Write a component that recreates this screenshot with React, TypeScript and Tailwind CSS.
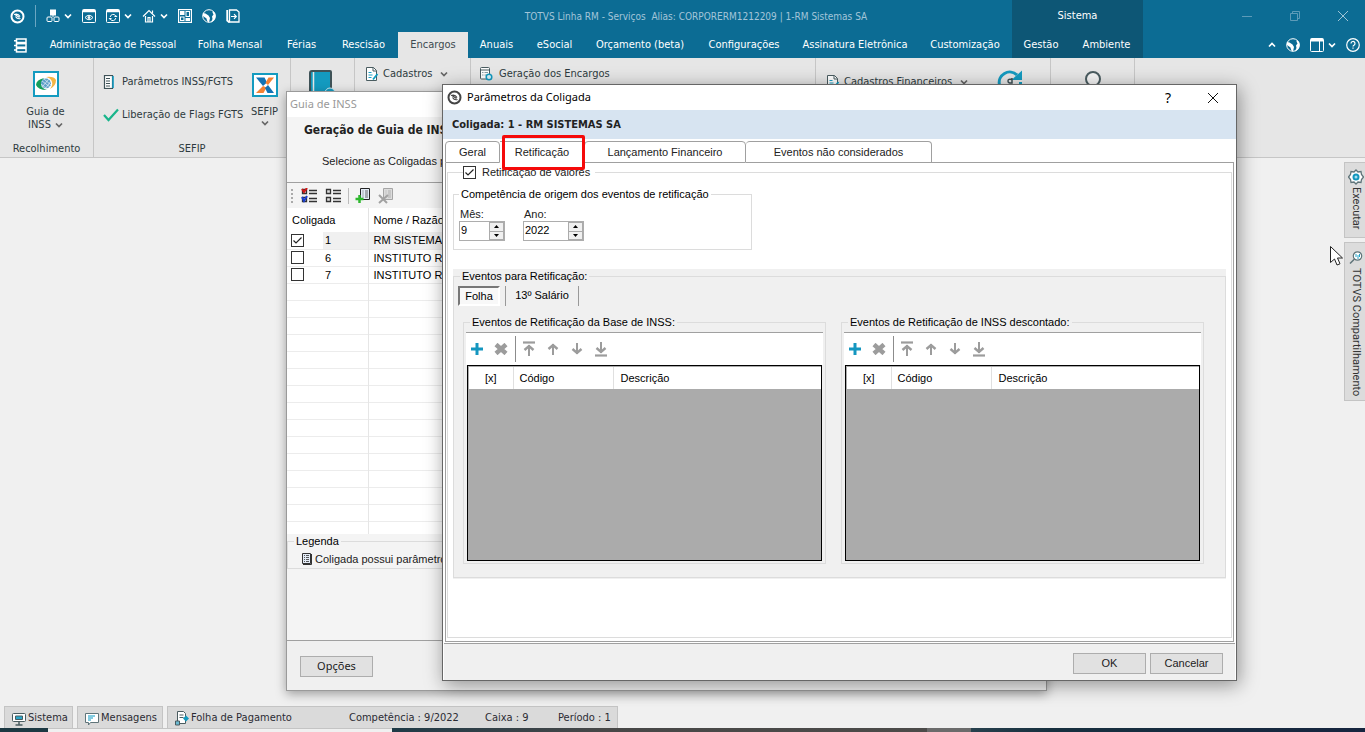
import type { ReactNode } from "react";

const TABS = [
  { label: "Administração de Pessoal", width: "w-[146px]" },
  { label: "Folha Mensal", width: "w-[88px]" },
  { label: "Férias", width: "w-[55px]" },
  { label: "Rescisão", width: "w-[69px]" },
  { label: "Encargos", width: "w-[70px]", active: true },
  { label: "Anuais", width: "w-[57px]" },
  { label: "eSocial", width: "w-[59px]" },
  { label: "Orçamento (beta)", width: "w-[112px]" },
  { label: "Configurações", width: "w-[96px]" },
  { label: "Assinatura Eletrônica", width: "w-[126px]" },
  { label: "Customização", width: "w-[94px]" },
];

const COMPANIES = [
  { id: "1", name: "RM SISTEMAS", checked: true },
  { id: "6", name: "INSTITUTO R", checked: false },
  { id: "7", name: "INSTITUTO R", checked: false },
];

type IconProps = { className?: string };

const Chevron = ({ className = "" }: IconProps) => (
  <svg viewBox="0 0 8 8" className={`h-2 w-2 shrink-0 ${className}`} fill="none" stroke="currentColor" strokeWidth="1.700">
    <path d="M1 2.500 4 5.500 7 2.500" />
  </svg>
);

const TotvsLogo = ({ className = "" }: IconProps) => (
  <svg viewBox="0 0 15 15" className={`h-[15px] w-[15px] shrink-0 ${className}`} fill="none" stroke="currentColor">
    <circle cx="7.500" cy="7.500" r="6" strokeWidth="2" />
    <path d="M4 5.500Q8 4 10 7.500M5 5.500 9.500 8.500M5.500 7.500Q7.500 10.500 10.500 9.500" strokeWidth="1.200" />
  </svg>
);

const Cubes = () => (
  <svg viewBox="0 0 14 14" className="h-3.5 w-3.5" fill="none" stroke="currentColor">
    <rect x="4.500" y="1" width="5" height="5" fill="currentColor" />
    <path d="M7 6v2" />
    <rect x="1" y="8" width="5" height="4.500" rx="1" />
    <rect x="8" y="8" width="5" height="4.500" rx="1" />
  </svg>
);

const WindowEye = () => (
  <svg viewBox="0 0 14 14" className="h-3.5 w-3.5" fill="none" stroke="currentColor">
    <rect x="0.500" y="0.500" width="13" height="13" rx="1" />
    <path d="M1 2h12" strokeWidth="2.500" />
    <path d="M3 8.500q4-4.500 8 0-4 4.500-8 0z" />
    <circle cx="7" cy="8.500" r="1" fill="currentColor" />
  </svg>
);

const WindowRefresh = () => (
  <svg viewBox="0 0 14 14" className="h-3.5 w-3.5" fill="none" stroke="currentColor">
    <rect x="0.500" y="0.500" width="13" height="13" rx="1" />
    <path d="M1 2h12" strokeWidth="2.500" />
    <path d="M4.200 8a3 3 0 0 1 5.300-1.500M9.800 9a3 3 0 0 1-5.300 1.500" />
    <path d="M8 8h3.500L9.800 6zM2.500 9H6L4.200 11z" fill="currentColor" stroke="none" />
  </svg>
);

const HomeIcon = () => (
  <svg viewBox="0 0 14 14" className="h-3.5 w-3.5" fill="none" stroke="currentColor" strokeWidth="1.200">
    <path d="M1 7.500 7 1.500l6 6M3.500 7v6h7V7M6 13V8.500h2V13" />
    <path d="M10.500 1.500v3" />
  </svg>
);

const GridIcon = () => (
  <svg viewBox="0 0 14 14" className="h-3.5 w-3.5" fill="none" stroke="currentColor">
    <rect x="0.500" y="0.500" width="13" height="13" strokeWidth="1.300" />
    <rect x="2.500" y="2.500" width="3.500" height="3" fill="currentColor" />
    <rect x="8" y="2.500" width="3.500" height="5" />
    <rect x="2.500" y="8" width="3.500" height="3.500" />
    <rect x="8" y="9.500" width="3.500" height="2" fill="currentColor" />
  </svg>
);

const Globe = () => (
  <svg viewBox="0 0 14 14" className="h-3.5 w-3.5" fill="none" stroke="currentColor">
    <circle cx="7" cy="7" r="6.300" />
    <path d="M1 4 3.500 4.500 6.500 6.500 8 9 7 13.500Q5 13 4.500 9.500L1 7zM11 2q3 2 2.500 6T8.800 13.500L10.500 10 10 7.500 11.500 5.500l-1-2z" fill="currentColor" stroke="none" />
  </svg>
);

const ExitIcon = () => (
  <svg viewBox="0 0 14 14" className="h-3.5 w-3.5" fill="none" stroke="currentColor">
    <path d="M3.500 1h7l2.500 2v10H3.500z" strokeWidth="1.300" />
    <path d="M1.200 1v10.500l2.300 2" strokeWidth="1.800" />
    <path d="M5 7.500h5M8 5.200l2.300 2.300L8 9.800" strokeWidth="1.200" />
  </svg>
);

const MenuStack = () => (
  <svg viewBox="0 0 13 15" className="h-[15px] w-[13px]" fill="none" stroke="currentColor" strokeWidth="1.500">
    <rect x="2.500" y="1" width="9.500" height="3.500" />
    <rect x="2.500" y="5.700" width="9.500" height="3.500" />
    <rect x="2.500" y="10.400" width="9.500" height="3.500" />
    <path d="M0 2.700h3M0 7.400h3M0 12.100h3" />
  </svg>
);

const SheetIcon = ({ className = "" }: IconProps) => (
  <svg viewBox="0 0 14 14" className={`h-3.5 w-3.5 shrink-0 ${className}`} fill="none" stroke="#4a5c60">
    <path d="M1.500.5h7l3 3v10h-10z" fill="#fff" />
    <path d="M8 .5v3.500h3.500" />
    <path d="M3.500 5.500h3M3.500 8h4M3.500 10.500h3" stroke="#1a9fc4" />
    <path d="M8 12.500 12.500 7" stroke="#0c9abe" strokeWidth="1.800" />
  </svg>
);

const NotebookIcon = () => (
  <svg viewBox="0 0 12 14" className="h-3.5 w-3 shrink-0" fill="none" stroke="#3f5257">
    <rect x="1.500" y=".5" width="8" height="13" fill="#fff" strokeWidth="1.200" />
    <path d="M10 1v12" stroke="#159ac0" strokeWidth="1.600" />
    <path d="M3 3.500h4M3 6h4M3 8.500h4M3 11h4" />
  </svg>
);

const GearWindowIcon = () => (
  <svg viewBox="0 0 14 14" className="h-3.5 w-3.5 shrink-0" fill="none" stroke="#4a5c60">
    <rect x="1.500" y=".5" width="9" height="11.500" rx="1" fill="#fff" />
    <path d="M1.500 3h9" />
    <path d="M3 5.500h1.500M5.500 5.500H9M3 8h1.500M5.500 8H8" stroke="#8ba0a5" />
    <circle cx="10" cy="10" r="2.800" fill="#d8f1f8" stroke="#139ac0" strokeWidth="1.500" />
  </svg>
);

const CaixaIcon = () => (
  <svg viewBox="0 0 26 26" className="h-[26px] w-[26px]">
    <rect x="1" y="1" width="24" height="24" fill="#fff" stroke="#149bc0" strokeWidth="2" />
    <path d="M11 7Q3 9 3 14q2 5 11 5-6-2-6-6 0-3 3-6z" fill="#159e5b" />
    <path d="M13 6q8-1 10 3 0 6-6 9 3-4 2-7-1-4-6-5z" fill="#f4b545" />
    <ellipse cx="13" cy="12.500" rx="5" ry="5" fill="#5d9fc9" />
    <path d="m9 10 8 6M8 13l6 5M11 8l7 6M9 16l7-8M12 18l6-8" stroke="#fff" strokeWidth=".6" />
  </svg>
);

const SefipIcon = () => (
  <svg viewBox="0 0 26 24" className="h-6 w-[26px]">
    <rect x="1" y="1" width="24" height="22" fill="#fff" stroke="#149bc0" strokeWidth="2" />
    <path d="M4 4.500h8.500l2.500 5-4 3.500z" fill="#1173b5" />
    <path d="M22 4.500h-5.500l-3 5.500 2.500 2z" fill="#f48232" />
    <path d="M11 13 4 20h7.500l3-5.500z" fill="#f48232" />
    <path d="m16 12 6 8h-6.500L13 15z" fill="#1173b5" />
  </svg>
);

const LegendList = () => (
  <svg viewBox="0 0 10 12" className="h-3 w-2.5 shrink-0" fill="none" stroke="#333">
    <path d="M.5.5h8v10h-8z" fill="#e3ebf6" />
    <path d="M9.500 1v10.500H1" />
    <path d="M2 2.500h1M4 2.500h3M2 4.500h1M4 4.500h3M2 6.500h1M4 6.500h3M2 8.500h1M4 8.500h3" strokeWidth=".8" />
  </svg>
);

const CheckBox = ({ label, checked }: { label: string; checked: boolean }) => (
  <span className="grid h-[13px] w-[13px] shrink-0">
    <input
      type="checkbox"
      aria-label={label}
      defaultChecked={checked}
      className="peer col-start-1 row-start-1 h-[13px] w-[13px] appearance-none border border-[#333] bg-white"
    />
    <svg viewBox="0 0 13 13" className="pointer-events-none col-start-1 row-start-1 hidden h-[13px] w-[13px] peer-checked:block" fill="none" stroke="#222" strokeWidth="1.200">
      <path d="M2.500 6.500 5 9l5.500-5.500" />
    </svg>
  </span>
);

const QuickAccess = () => (
  <div className="flex h-8 w-[380px] shrink-0 items-center pl-[10px]">
    <TotvsLogo />
    <span className="mx-[10px] h-[22px] w-px bg-[#6ba6c2]" />
    <div className="flex items-center gap-[10px]">
      <button className="flex items-center gap-1" aria-label="Módulos"><Cubes /><Chevron /></button>
      <button aria-label="Visualizar"><WindowEye /></button>
      <button className="flex items-center gap-1" aria-label="Atualizar"><WindowRefresh /><Chevron /></button>
      <button className="flex items-center gap-1" aria-label="Início"><HomeIcon /><Chevron /></button>
      <button aria-label="Painéis"><GridIcon /></button>
      <button aria-label="Idioma"><Globe /></button>
      <button aria-label="Sair"><ExitIcon /></button>
    </div>
  </div>
);

const AppHeader = () => (
  <header className="flex h-[58px] bg-[#0c6c94] text-white">
    <div className="min-w-0 flex-1">
      <div className="flex">
        <QuickAccess />
        <h1 className="flex h-8 flex-1 items-center justify-center text-[10px] whitespace-pre text-[#a3c5d9]">
          TOTVS Linha RM - Serviços  Alias: CORPORERM1212209 | 1-RM Sistemas SA
        </h1>
      </div>
      <nav className="flex h-[26px]">
        <button className="flex w-10 items-center justify-center" aria-label="Menu"><MenuStack /></button>
        {TABS.map((tab) => (
          <button
            key={tab.label}
            className={`${tab.width} whitespace-nowrap ${tab.active ? "bg-[#e6e6e6] text-[#3d4a50]" : ""}`}
          >
            {tab.label}
          </button>
        ))}
      </nav>
    </div>
    <div className="w-[131px] bg-[#0d5675]">
      <div className="flex h-8 items-center justify-center">Sistema</div>
      <div className="flex h-[26px]">
        <button className="w-[58px]">Gestão</button>
        <button className="flex-1">Ambiente</button>
      </div>
    </div>
    <div className="w-[222px]">
      <div className="flex h-8 items-center justify-end gap-[38px] pr-[17px] text-[#5d9bb8]">
        <button aria-label="Minimizar">
          <svg viewBox="0 0 10 10" className="h-2.5 w-2.5" stroke="currentColor"><path d="M0 5.500h10" /></svg>
        </button>
        <button aria-label="Restaurar">
          <svg viewBox="0 0 10 10" className="h-2.5 w-2.5" fill="none" stroke="currentColor">
            <path d="M.5 2.500h7v7h-7zM2.500 2.500v-2h7v7h-2" />
          </svg>
        </button>
        <button aria-label="Fechar" className="text-[#9fc4d6]">
          <svg viewBox="0 0 10 10" className="h-2.5 w-2.5" stroke="currentColor"><path d="m0 0 10 10M10 0 0 10" /></svg>
        </button>
      </div>
      <div className="flex h-[26px] items-center justify-end gap-[10px] pr-[5px]">
        <button aria-label="Recolher"><Chevron className="rotate-180" /></button>
        <button aria-label="Idioma"><Globe /></button>
        <button className="flex items-center gap-1" aria-label="Layout">
          <svg viewBox="0 0 14 14" className="h-3.5 w-3.5" fill="none" stroke="currentColor">
            <rect x=".5" y=".5" width="13" height="13" rx="1" />
            <path d="M1 2h12" strokeWidth="3" />
            <path d="M9.500 3v10" />
          </svg>
          <Chevron />
        </button>
        <button aria-label="Ajuda">
          <svg viewBox="0 0 14 14" className="h-3.5 w-3.5" fill="none" stroke="currentColor" strokeWidth="1.200">
            <circle cx="7" cy="7" r="6.300" />
            <path d="M5 5.500a2 2 0 1 1 3 1.700q-1 .6-1 1.300M7 9.500v1.200" />
          </svg>
        </button>
      </div>
    </div>
  </header>
);

const RibbonGroup = ({ className = "", title, children }: { className?: string; title?: string; children?: ReactNode }) => (
  <div className={`flex shrink-0 flex-col border-r border-[#c6c6c6] ${className}`}>
    <div className="flex flex-1">{children}</div>
    {title && <div className="h-4 text-center leading-4">{title}</div>}
  </div>
);

const Ribbon = () => (
  <div className="flex h-[100px] overflow-hidden border-b border-[#c6c6c6] bg-[#e6e6e6] text-[#2e3b40]">
    <RibbonGroup className="w-[94px]" title="Recolhimento">
      <button className="flex w-full flex-col items-center pt-[13px] pr-[2px] leading-[13px]">
        <CaixaIcon />
        <span className="pt-2">Guia de</span>
        <span className="flex items-center gap-1">INSS <Chevron className="text-[#666]" /></span>
      </button>
    </RibbonGroup>
    <RibbonGroup className="w-[197px]" title="SEFIP">
      <div className="flex w-[149px] flex-col gap-[17px] pt-4 pl-[9px] leading-4">
        <button className="flex items-center gap-[7px] whitespace-nowrap"><NotebookIcon />Parâmetros INSS/FGTS</button>
        <button className="flex items-center gap-[3px] whitespace-nowrap">
          <svg viewBox="0 0 16 14" className="h-3.5 w-4 shrink-0" fill="none" stroke="#19b58b" strokeWidth="2.200">
            <path d="m1 7 4.500 5L15 1.500" />
          </svg>
          Liberação de Flags FGTS
        </button>
      </div>
      <button className="flex flex-1 flex-col items-center pt-[15px] pr-1 leading-[13px]">
        <SefipIcon />
        <span className="pt-2 pb-px">SEFIP</span>
        <Chevron className="text-[#666]" />
      </button>
    </RibbonGroup>
    <RibbonGroup className="w-16">
      <button className="flex items-start pt-3 pl-[18px]" aria-label="Relatórios">
        <svg viewBox="0 0 26 32" className="h-8 w-[26px]" fill="none">
          <path d="M3 1h18q1 0 1 1v28H3q-2 0-2-2V3q0-2 2-2z" fill="#149abf" stroke="#3f5257" strokeWidth="2" />
          <path d="M4.500 2v27" stroke="#e6e6e6" strokeWidth="1.500" />
          <circle cx="21" cy="23" r="5" fill="#149abf" stroke="#cfeaf2" />
        </svg>
      </button>
    </RibbonGroup>
    <RibbonGroup className="w-[116px]">
      <button className="mt-2 flex h-4 items-center gap-1 pl-[10px]"><SheetIcon />Cadastros<Chevron className="ml-1 text-[#666]" /></button>
    </RibbonGroup>
    <RibbonGroup className="w-[345px]">
      <button className="mt-2 flex h-4 items-center gap-[6px] pl-2"><GearWindowIcon />Geração dos Encargos</button>
    </RibbonGroup>
    <RibbonGroup className="w-[235px]">
      <button className="mt-4 flex h-4 w-[152px] items-center gap-1 pl-[10px] whitespace-nowrap"><SheetIcon />Cadastros Financeiros<Chevron className="ml-1 text-[#666]" /></button>
      <button className="flex items-start pt-[11px] pl-7" aria-label="Contabilização">
        <svg viewBox="0 0 28 28" className="h-7 w-7" fill="none">
          <path d="M3.500 16A10.500 10.500 0 0 1 21 6M24.500 13a10.500 10.500 0 0 1-18 8" stroke="#149abf" strokeWidth="3" />
          <path d="M26 1.500V11H15.500z" fill="#149abf" />
          <path d="M16 10.500q-4-1-4 1.500t4 2v-5" stroke="#3f5257" strokeWidth="1.500" />
        </svg>
      </button>
    </RibbonGroup>
    <RibbonGroup className="w-[84px]">
      <button className="flex w-full items-start justify-center pt-[13px]" aria-label="Pesquisar">
        <svg viewBox="0 0 18 24" className="h-6 w-[18px]" fill="none" stroke="#4a5c60" strokeWidth="2">
          <circle cx="9" cy="8" r="7" fill="#f4f4f4" />
          <path d="M9 15v8" />
        </svg>
      </button>
    </RibbonGroup>
  </div>
);

const SideTabs = () => (
  <aside className="flex w-[21px] flex-col gap-1 pt-1 font-['Roboto',sans-serif] text-[#333]">
    <button className="flex h-[76px] flex-col items-center gap-[2px] border border-r-0 border-[#c4c4c4] bg-[#dcdcdc] pt-[6px] pl-px">
      <svg viewBox="0 0 16 16" className="h-4 w-4 shrink-0" fill="none">
        <path d="m8 1 2 2 3-.5.5 3L15.500 8l-2 2.500-.5 3-3-.5-2 2-2-2-3 .5-.5-3L.5 8l2-2.500.5-3 3 .5z" fill="#fff" stroke="#5f7479" strokeWidth="1.300" />
        <circle cx="8" cy="8" r="2.500" fill="#a4dff0" stroke="#1297bd" strokeWidth="2" />
      </svg>
      <span className="[writing-mode:vertical-rl]">Executar</span>
    </button>
    <button className="flex h-[159px] flex-col items-center gap-1 border border-r-0 border-[#c4c4c4] bg-[#dcdcdc] pt-2 pl-px">
      <svg viewBox="0 0 14 13" className="h-[13px] w-3.5 shrink-0" fill="none" stroke="#5f7479">
        <circle cx="8.500" cy="5" r="4.200" fill="#fff" strokeWidth="1.200" />
        <path d="M5.500 8 1 12.500" strokeWidth="1.500" />
        <path d="M7 3v3M9 4v4M10.500 3v3" stroke="#27a4c8" />
      </svg>
      <span className="whitespace-nowrap [writing-mode:vertical-rl]">TOTVS Compartilhamento</span>
    </button>
  </aside>
);

const StatusBar = () => (
  <footer>
    <div className="flex h-[22px] gap-1 pl-1 text-[#2b2b33]">
      <div className="flex w-[69px] items-center gap-[2px] whitespace-nowrap border border-b-0 border-[#c4c4c4] bg-[#dadada] pt-[2px] pl-[7px]">
        <svg viewBox="0 0 14 14" className="h-3.5 w-3.5 shrink-0" fill="none" stroke="#4a5c60">
          <rect x=".5" y="1.500" width="13" height="8" rx="1" fill="#fff" />
          <path d="M3.500 4h7v3.500h-7z" fill="#2ba6c9" />
          <path d="M7 10v3M3.500 13h7" strokeWidth="1.500" />
        </svg>
        Sistema
      </div>
      <div className="flex w-[86px] items-center gap-[2px] whitespace-nowrap border border-b-0 border-[#c4c4c4] bg-[#dadada] pt-[2px] pl-[7px]">
        <svg viewBox="0 0 14 14" className="h-3.5 w-3.5 shrink-0" fill="none" stroke="#5f7479">
          <path d="M.5 1.500h13v9H5.500L3.500 13v-2.500h-3z" fill="#fff" />
          <path d="M3 4h7M3 6h5M3 8h3" stroke="#5bbcd8" strokeWidth="1.500" />
        </svg>
        Mensagens
      </div>
      <div className="flex w-[451px] items-center whitespace-nowrap border border-b-0 border-[#c4c4c4] bg-[#dadada] pt-[2px] pl-[7px]">
        <svg viewBox="0 0 14 15" className="h-[15px] w-3.5 shrink-0" fill="none" stroke="#4a5c60">
          <path d="M2.500.5h6l2 2v10h-8z" fill="#fff" />
          <path d="M4.500 4h4M4.500 6.500h4" />
          <path d="M11 4.500 14 7.500l-3 3-3-3z" fill="#149abf" stroke="none" />
          <path d="M.5 10h4v4h-4z" fill="#6bb9d1" />
        </svg>
        <span className="w-[160px] pl-[2px]">Folha de Pagamento</span>
        <span className="w-[136px]">Competência : 9/2022</span>
        <span className="w-[73px]">Caixa : 9</span>
        <span>Período : 1</span>
      </div>
    </div>
    <div className="flex h-1">
      <span className="w-12 bg-[#1c3842]" />
      <span className="w-[344px] border-t border-[#c4c4c4] bg-[#f0f0f0]" />
      <span className="w-[535px] bg-linear-to-r from-[#1e3a47] via-[#474747] via-40% to-[#4c4b49]" />
      <span className="w-[44px] bg-[#6b6b6b]" />
      <span className="flex-1 bg-linear-to-r from-[#27404d] via-[#17303f] via-20% to-[#16253f]" />
    </div>
  </footer>
);

const MarkListIcon = ({ marked }: { marked?: boolean }) => (
  <svg viewBox="0 0 17 16" className="h-4 w-[17px]" fill="none" stroke="#333">
    <path d="M1.500 1.500h4v4h-4zM1.500 9.500h4v4h-4z" fill="#ddd" strokeWidth="1.300" />
    <path d="M8 2.500h8M8 5.500h8M8 10.500h8M8 13.500h8" strokeWidth="1.300" />
    {marked && <path d="m1 1 2 3 3-4" stroke="#d01818" strokeWidth="2" />}
    {marked && <path d="m1 9 2 4 3-5" stroke="#1a3fd0" strokeWidth="2" />}
  </svg>
);

const ListPageIcon = ({ disabled }: { disabled?: boolean }) => (
  <svg viewBox="0 0 16 16" className="h-4 w-4" fill="none">
    <path d="M5.500.5h9v11h-9z" fill={disabled ? "#dcdcdc" : "#e3ebf6"} stroke={disabled ? "#a5a5a5" : "#222"} />
    <path d="M7.500 3h1M10 3h3M7.500 5h1M10 5h3M7.500 7h1M10 7h3M7.500 9h1M10 9h3" stroke={disabled ? "#a5a5a5" : "#444"} strokeWidth=".8" />
    {disabled ? (
      <path d="m1 7 8 8M10 7l-9 8" stroke="#a2a2a2" strokeWidth="2" />
    ) : (
      <path d="M4.500 7v8M.5 11h8" stroke="#2eb82e" strokeWidth="2.500" />
    )}
  </svg>
);

const GuiaWindow = () => (
  <section className="absolute top-[91px] left-[286px] flex h-[600px] w-[761px] flex-col border border-[#9a9a9a] bg-[#f4f4f4] font-['Liberation_Sans',Arial,sans-serif] text-[11px] text-[#222] shadow-[0_3px_10px_rgba(0,0,0,0.35)]">
    <h2 className="flex h-[25px] shrink-0 items-center bg-white pl-[3px] font-['Noto_Sans',sans-serif] text-[#999]">Guia de INSS</h2>
    <div className="h-[66px] shrink-0 border-b border-[#a0a0a0] pt-[5px]">
      <h3 className="pl-[17px] font-['DejaVu_Sans_Condensed','Noto_Sans',sans-serif] text-xs leading-4 font-bold">Geração de Guia de INS</h3>
      <p className="pt-[15px] pl-[35px] leading-4">Selecione as Coligadas pa</p>
    </div>
    <div className="flex h-[25px] shrink-0 items-center pl-1">
      <span className="mr-2 h-[14px] border-l-2 border-dotted border-[#aaa]" />
      <button aria-label="Marcar todos"><MarkListIcon marked /></button>
      <button className="ml-[7px]" aria-label="Desmarcar todos"><MarkListIcon /></button>
      <span className="mx-[6px] h-4 w-px bg-[#bbb]" />
      <button aria-label="Incluir parâmetros"><ListPageIcon /></button>
      <button className="ml-[7px]" aria-label="Excluir parâmetros"><ListPageIcon disabled /></button>
    </div>
    <div className="h-[326px] shrink-0 overflow-hidden bg-white">
      <table className="w-full table-fixed border-collapse text-black">
        <colgroup>
          <col className="w-9" />
          <col className="w-[45px]" />
          <col />
        </colgroup>
        <thead>
          <tr className="h-6">
            <th className="pl-[5px] text-left font-normal" colSpan={2}>Coligada</th>
            <th className="border-l border-[#e3e3e3] pl-[5px] text-left font-normal">Nome / Razão</th>
          </tr>
        </thead>
        <tbody className="leading-4">
          {COMPANIES.map((company) => (
            <tr key={company.id} className="h-[17px] border-b border-[#ececec]">
              <td className="pl-1"><CheckBox label={`Coligada ${company.id}`} checked={company.checked} /></td>
              <td className={`pl-[2px] ${company.checked ? "bg-[#f0f0f0]" : ""}`}>{company.id}</td>
              <td className={`border-l border-[#e6e6e6] pl-[5px] ${company.checked ? "bg-[#f0f0f0]" : ""}`}>{company.name}</td>
            </tr>
          ))}
          {Array.from({ length: 15 }, (_, i) => (
            <tr key={i} className="h-[17px] border-b border-[#ececec]">
              <td colSpan={2} />
              <td className="border-l border-[#e6e6e6]" />
            </tr>
          ))}
        </tbody>
      </table>
    </div>
    <fieldset className="h-[35px] shrink-0 border border-[#dcdcdc]">
      <legend className="ml-[6px] px-[2px] leading-[14px] text-black">Legenda</legend>
      <p className="flex items-center gap-[3px] pt-[3px] pl-[14px] leading-4"><LegendList />Coligada possui parâmetro</p>
    </fieldset>
    <div className="mt-auto h-[50px] shrink-0 border-t border-[#a0a0a0] bg-[#f0f0f0] pt-[15px] pl-[13px]">
      <button className="h-[21px] w-[73px] border border-[#adadad] bg-[#e1e1e1] font-['Noto_Sans',sans-serif]">Opções</button>
    </div>
  </section>
);

const NumberField = ({ id, label, value, width }: { id: string; label: string; value: string; width: string }) => (
  <div className={width}>
    <label htmlFor={id} className="block h-[14px] pl-px leading-[14px]">{label}</label>
    <div className="flex h-5 border border-[#adadad] bg-white">
      <input id={id} defaultValue={value} className="min-w-0 flex-1 pb-[2px] pl-px text-black outline-none" />
      <div className="flex w-[15px] shrink-0 flex-col gap-px bg-[#ababab] p-px">
        <button className="flex flex-1 items-center justify-center bg-[#f0f0f0]" aria-label={`Aumentar ${label}`}>
          <svg viewBox="0 0 5 3" className="h-[3px] w-[5px]"><path d="M0 3 2.500 0 5 3z" /></svg>
        </button>
        <button className="flex flex-1 items-center justify-center bg-[#f0f0f0]" aria-label={`Diminuir ${label}`}>
          <svg viewBox="0 0 5 3" className="h-[3px] w-[5px]"><path d="M0 0 2.500 3 5 0z" /></svg>
        </button>
      </div>
    </div>
  </div>
);

const MoveArrow = ({ up, bar }: { up?: boolean; bar?: boolean }) => (
  <svg viewBox="0 0 14 16" className={`h-4 w-3.5 ${up ? "" : "rotate-180"}`} fill="none" stroke="currentColor" strokeWidth="2">
    {bar && <path d="M1 1.500h12" strokeWidth="2.200" />}
    <path d={bar ? "M7 4v11" : "M7 3v11"} />
    <path d={bar ? "M2.500 9 7 5l4.500 4" : "M2.500 8 7 4l4.500 4"} strokeWidth="2.400" />
  </svg>
);

const EventGrid = ({ title }: { title: string }) => (
  <fieldset className="h-[249px] w-[363px] border border-[#dcdcdc] px-[2px]">
    <legend className="ml-1 px-[2px] leading-[14px] text-black">{title}</legend>
    <div className="mt-[3px] flex h-[33px] items-center border-t border-[#a0a0a0] bg-white pl-[5px] text-[#9c9c9c]">
      <button className="w-[14px]" aria-label="Incluir">
        <svg viewBox="0 0 12 12" className="h-3 w-3" stroke="#1496bf" strokeWidth="3"><path d="M6 0v12M0 6h12" /></svg>
      </button>
      <button className="ml-[9px]" aria-label="Excluir">
        <svg viewBox="0 0 14 12" className="h-3 w-3.5" stroke="currentColor" strokeWidth="4.500"><path d="m2 1.500 10 9M12 1.500l-10 9" /></svg>
      </button>
      <span className="mr-[6px] ml-[7px] h-[26px] w-px bg-[#8c8c8c]" />
      <div className="flex gap-[10px]">
        <button aria-label="Primeiro"><MoveArrow up bar /></button>
        <button aria-label="Anterior"><MoveArrow up /></button>
        <button aria-label="Próximo"><MoveArrow /></button>
        <button aria-label="Último"><MoveArrow bar /></button>
      </div>
    </div>
    <div className="mx-px h-[196px] border border-black bg-[#ababab] pt-px pl-px">
      <table className="w-full table-fixed border-collapse bg-white text-black">
        <thead>
          <tr className="h-[22px]">
            <th className="w-[44px] font-normal">[x]</th>
            <th className="w-[100px] border-l border-[#e0e0e0] pl-[6px] text-left font-normal">Código</th>
            <th className="border-l border-[#e0e0e0] pl-[7px] text-left font-normal">Descrição</th>
          </tr>
        </thead>
      </table>
    </div>
  </fieldset>
);

const ParametrosDialog = () => (
  <section
    role="dialog"
    aria-label="Parâmetros da Coligada"
    className="absolute top-[84px] left-[442px] flex h-[597px] w-[795px] flex-col border border-[#666] bg-white font-['Liberation_Sans',Arial,sans-serif] text-[11px] text-[#222] shadow-[2px_4px_18px_rgba(0,0,0,0.4)]"
  >
    <div className="flex h-[25px] shrink-0 items-center pl-1 font-['Noto_Sans',sans-serif] text-black">
      <TotvsLogo className="text-[#444]" />
      <h2 className="flex-1 pl-[5px]">Parâmetros da Coligada</h2>
      <button className="w-6 text-sm" aria-label="Ajuda">?</button>
      <button className="mr-[18px] ml-[28px]" aria-label="Fechar">
        <svg viewBox="0 0 10 10" className="h-2.5 w-2.5" stroke="#111"><path d="m0 0 10 10M10 0 0 10" /></svg>
      </button>
    </div>
    <div className="flex h-[29px] shrink-0 items-center bg-[#d7e4f1] pt-[2px] pl-[9px] font-['DejaVu_Sans_Condensed','Noto_Sans',sans-serif] font-bold">
      Coligada: 1 - RM SISTEMAS SA
    </div>
    <div className="flex h-6 shrink-0 pt-[2px] pl-[2px]" role="tablist">
      <button role="tab" className="w-[55px] rounded-t border border-[#a0a0a0]">Geral</button>
      <button role="tab" aria-selected className="w-[84px] border-t border-[#a0a0a0]">Retificação</button>
      <button role="tab" className="w-[162px] rounded-t border border-[#a0a0a0]">Lançamento Financeiro</button>
      <button role="tab" className="w-[186px] rounded-t border border-l-0 border-[#a0a0a0]">Eventos não considerados</button>
      <span className="mr-[2px] flex-1 border-b border-[#a0a0a0]" />
    </div>
    <div className="mx-[2px] flex-1 border-x border-b border-[#a0a0a0] px-px pt-[2px] pb-[3px]">
      <fieldset className="h-full border border-[#dcdcdc] px-[5px]">
        <legend className="ml-[10px] pr-[5px] leading-[14px]">
          <label className="flex items-center gap-[6px]"><CheckBox label="Retificação de valores" checked />Retificação de valores</label>
        </legend>
        <fieldset className="mt-2 h-[63px] w-[299px] border border-[#dcdcdc] px-[5px]">
          <legend className="px-[2px] leading-[14px] text-black">Competência de origem dos eventos de retificação</legend>
          <div className="flex gap-[18px] pt-[6px]">
            <NumberField id="mes" label="Mês:" value="9" width="w-[46px]" />
            <NumberField id="ano" label="Ano:" value="2022" width="w-[61px]" />
          </div>
        </fieldset>
        <div className="mt-[19px] h-[310px] bg-[#f0f0f0]">
          <fieldset className="h-[309px] border border-[#dcdcdc] px-1">
            <legend className="ml-[2px] px-[2px] leading-[14px] text-black">Eventos para Retificação:</legend>
            <div className="mt-[2px] flex h-[21px] items-center text-black">
              <button className="h-5 w-[42px] border-2 border-t-[#777] border-r-white border-b-white border-l-[#777] bg-[#f8f8f8]">Folha</button>
              <span className="ml-[5px] h-5 w-px bg-[#999]" />
              <button className="w-[72px]">13º Salário</button>
              <span className="h-5 w-px bg-[#999]" />
            </div>
            <div className="flex gap-[15px] pt-[9px] pl-[5px]">
              <EventGrid title="Eventos de Retificação da Base de INSS:" />
              <EventGrid title="Eventos de Retificação de INSS descontado:" />
            </div>
          </fieldset>
        </div>
      </fieldset>
    </div>
    <div className="mx-px mt-px flex h-[37px] shrink-0 items-end justify-end gap-1 border-t border-[#a0a0a0] bg-[#f0f0f0] pr-3 pb-[6px]">
      <button className="h-[21px] w-[73px] border border-[#adadad] bg-[#e1e1e1]">OK</button>
      <button className="h-[21px] w-[73px] border border-[#adadad] bg-[#e1e1e1]">Cancelar</button>
    </div>
    <div className="pointer-events-none absolute top-[50px] left-[59px] h-[35px] w-[83px] rounded-[2px] border-[3px] border-[#f50a0a]" />
  </section>
);

export default function App() {
  return (
    <div className="relative flex min-h-screen flex-col bg-[#f0f0f0] font-['DejaVu_Sans_Condensed','Noto_Sans',sans-serif] text-[11px]">
      <AppHeader />
      <Ribbon />
      <div className="flex flex-1">
        <main className="flex-1">
          <GuiaWindow />
          <ParametrosDialog />
        </main>
        <SideTabs />
      </div>
      <StatusBar />
      <svg viewBox="0 0 13 20" className="pointer-events-none absolute top-[246px] left-[1330px] h-5 w-[13px]" fill="#fff" stroke="#222">
        <path d="M.5.5v16L4.500 13l2.500 6 3-1.200L7.500 12h5z" />
      </svg>
    </div>
  );
}
